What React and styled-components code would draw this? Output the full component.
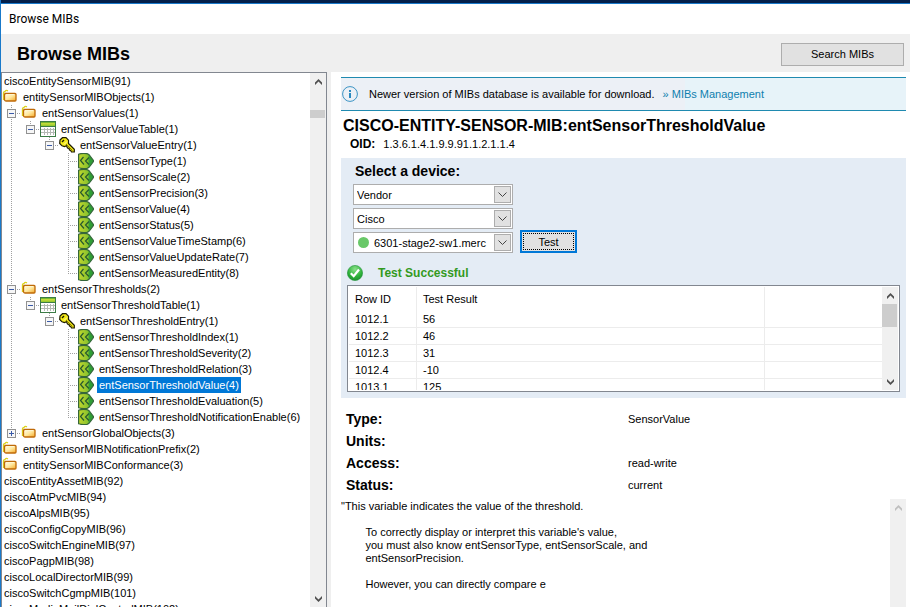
import React from "react";
import styled, { createGlobalStyle, css } from "styled-components";

const leaves = (names) =>
  names.map((name) => ({ name, icon: "leaf" }));

// The MIB tree, in display order
const tree = [
  {
    name: "ciscoEntitySensorMIB(91)",
    children: [
      {
        name: "entitySensorMIBObjects(1)",
        icon: "folder",
        children: [
          {
            name: "entSensorValues(1)",
            icon: "folder",
            toggle: "minus",
            children: [
              {
                name: "entSensorValueTable(1)",
                icon: "table",
                toggle: "minus",
                children: [
                  {
                    name: "entSensorValueEntry(1)",
                    icon: "key",
                    toggle: "minus",
                    children: leaves([
                      "entSensorType(1)",
                      "entSensorScale(2)",
                      "entSensorPrecision(3)",
                      "entSensorValue(4)",
                      "entSensorStatus(5)",
                      "entSensorValueTimeStamp(6)",
                      "entSensorValueUpdateRate(7)",
                      "entSensorMeasuredEntity(8)",
                    ]),
                  },
                ],
              },
            ],
          },
          {
            name: "entSensorThresholds(2)",
            icon: "folder",
            toggle: "minus",
            children: [
              {
                name: "entSensorThresholdTable(1)",
                icon: "table",
                toggle: "minus",
                children: [
                  {
                    name: "entSensorThresholdEntry(1)",
                    icon: "key",
                    toggle: "minus",
                    children: leaves([
                      "entSensorThresholdIndex(1)",
                      "entSensorThresholdSeverity(2)",
                      "entSensorThresholdRelation(3)",
                      "entSensorThresholdValue(4)",
                      "entSensorThresholdEvaluation(5)",
                      "entSensorThresholdNotificationEnable(6)",
                    ]),
                  },
                ],
              },
            ],
          },
          { name: "entSensorGlobalObjects(3)", icon: "folder", toggle: "plus" },
        ],
      },
      { name: "entitySensorMIBNotificationPrefix(2)", icon: "folder" },
      { name: "entitySensorMIBConformance(3)", icon: "folder" },
    ],
  },
  { name: "ciscoEntityAssetMIB(92)" },
  { name: "ciscoAtmPvcMIB(94)" },
  { name: "ciscoAlpsMIB(95)" },
  { name: "ciscoConfigCopyMIB(96)" },
  { name: "ciscoSwitchEngineMIB(97)" },
  { name: "ciscoPagpMIB(98)" },
  { name: "ciscoLocalDirectorMIB(99)" },
  { name: "ciscoSwitchCgmpMIB(101)" },
  { name: "ciscoMediaMailDialControlMIB(102)" },
];

const results = [
  ["1012.1", "56"],
  ["1012.2", "46"],
  ["1012.3", "31"],
  ["1012.4", "-10"],
  ["1013.1", "125"],
];

const details = [
  ["Type:", "SensorValue"],
  ["Units:", ""],
  ["Access:", "read-write"],
  ["Status:", "current"],
];

const description = `"This variable indicates the value of the threshold.

        To correctly display or interpret this variable's value,
        you must also know entSensorType, entSensorScale, and
        entSensorPrecision.

        However, you can directly compare e`;

const App = () => {
  const [selected, setSelected] = React.useState("entSensorThresholdValue(4)");
  return (
    <>
      <GlobalStyle />
      <IconDefs />
      <Window>
        <TitleBar>Browse MIBs</TitleBar>
        <Header>
          <h1>Browse MIBs</h1>
          <PushButton type="button" $wide>
            Search MIBs
          </PushButton>
        </Header>
        <Main>
          <TreePanel>
            <TreeList role="tree" aria-label="MIB tree">
              {tree.map((node) => (
                <TreeNode
                  key={node.name}
                  node={node}
                  depth={-1}
                  guides={[]}
                  selected={selected}
                  onSelect={setSelected}
                />
              ))}
            </TreeList>
            <ScrollBar offset={20} thumb={8} />
          </TreePanel>
          <Content>
            <Notice>
              <InfoIcon />
              <p>Newer version of MIBs database is available for download.</p>
              <a href="#mibs-management">» MIBs Management</a>
            </Notice>
            <Heading>CISCO-ENTITY-SENSOR-MIB:entSensorThresholdValue</Heading>
            <Oid>
              <strong>OID:</strong>
              <span>1.3.6.1.4.1.9.9.91.1.2.1.1.4</span>
            </Oid>
            <TestPanel />
            <Details>
              {details.map(([label, value]) => (
                <React.Fragment key={label}>
                  <dt>{label}</dt>
                  <dd>{value}</dd>
                </React.Fragment>
              ))}
            </Details>
            <Description>
              <textarea
                aria-label="Description"
                readOnly
                value={description}
              />
              <ScrollBar disabled />
            </Description>
          </Content>
        </Main>
      </Window>
    </>
  );
};

// One tree entry together with everything below it
const TreeNode = ({ node, depth, guides, last, selected, onSelect }) => {
  const { name, icon, toggle, children } = node;
  const NodeIcon = icons[icon];
  // Only entries below a top folder are joined by dotted lines
  const own = depth > 0 ? [last ? "last" : "tee"] : [];
  const below = depth > 0 ? [...guides, last ? "none" : "pass"] : [];
  return (
    <li role="treeitem" aria-selected={name === selected}>
      <Row>
        {[...guides, ...own].map((kind, index) => (
          <Guide key={index} $kind={kind}>
            {toggle && index === depth - 1 && (
              <Toggle type="button" aria-label={`Toggle ${name}`}>
                <svg viewBox="0 0 9 9" width="9" height="9">
                  <path
                    d={toggle === "plus" ? "M2 4.5h5M4.5 2v5" : "M2 4.5h5"}
                    stroke="#3a5aa8"
                  />
                </svg>
              </Toggle>
            )}
          </Guide>
        ))}
        {NodeIcon && (
          <IconCell>
            <NodeIcon />
          </IconCell>
        )}
        <Label
          type="button"
          $active={name === selected}
          onClick={() => onSelect(name)}
        >
          {name}
        </Label>
      </Row>
      {children && (
        <TreeList role="group">
          {children.map((child, index) => (
            <TreeNode
              key={child.name}
              node={child}
              depth={depth + 1}
              guides={below}
              last={index === children.length - 1}
              selected={selected}
              onSelect={onSelect}
            />
          ))}
        </TreeList>
      )}
    </li>
  );
};

// Device pickers, the test button and the result table
const TestPanel = () => {
  return (
    <Panel>
      <h2>Select a device:</h2>
      <Pickers>
        <Picker label="Vendor mode" value="Vendor" />
        <Picker label="Vendor name" value="Cisco" />
        <PickerLine>
          <Picker label="Device" value="6301-stage2-sw1.merc" status />
          <PushButton type="button" $focused>
            Test
          </PushButton>
        </PickerLine>
      </Pickers>
      <Status role="status">
        <CheckIcon />
        Test Successful
      </Status>
      <TableFrame>
        <TableClip>
          <ResultTable>
            <thead>
              <tr>
                <th>Row ID</th>
                <th>Test Result</th>
                <th aria-label="Empty" />
              </tr>
            </thead>
            <tbody>
              {results.map(([id, value]) => (
                <tr key={id}>
                  <td>{id}</td>
                  <td>{value}</td>
                  <td />
                </tr>
              ))}
            </tbody>
          </ResultTable>
        </TableClip>
        <ScrollBar offset={0} thumb={23} />
      </TableFrame>
    </Panel>
  );
};

const Picker = ({ label, value, status }) => {
  return (
    <PickerBox>
      {status && <Dot />}
      <select aria-label={label} defaultValue={value}>
        <option>{value}</option>
      </select>
      <span className="arrow">
        <svg width="9" height="5" viewBox="0 0 9 5" fill="none">
          <path d="M.5 .5l4 4 4-4" stroke="#444" />
        </svg>
      </span>
    </PickerBox>
  );
};

const ScrollBar = ({ offset, thumb, disabled }) => {
  return (
    <Bar $disabled={disabled} aria-hidden="true">
      <Arrow d="M0 3.500L3.500 0 7 3.500V6L3.500 2.500 0 6z" />
      <Track>
        {thumb && <Thumb style={{ marginTop: offset, height: thumb }} />}
      </Track>
      {!disabled && <Arrow d="M0 2.500L3.500 6 7 2.500V0L3.500 3.500 0 0z" />}
    </Bar>
  );
};

const Arrow = ({ d }) => (
  <span className="arrow">
    <svg width="7" height="6" viewBox="0 0 7 6">
      <path d={d} fill="currentColor" />
    </svg>
  </span>
);

const IconDefs = () => (
  <Defs aria-hidden="true">
    <defs>
      <linearGradient id="gold" x1="0" y1="0" x2="1" y2="1">
        <stop offset="0" stopColor="#fffdf0" />
        <stop offset=".5" stopColor="#ffe9a0" />
        <stop offset="1" stopColor="#f5a623" />
      </linearGradient>
      <linearGradient id="lime" x1="0" y1="0" x2="1" y2="0">
        <stop offset="0" stopColor="#c3d82c" />
        <stop offset=".6" stopColor="#8cc32e" />
        <stop offset=".75" stopColor="#2f9e35" />
        <stop offset="1" stopColor="#2f9e35" />
      </linearGradient>
      <linearGradient id="tableHead" x1="0" y1="0" x2="0" y2="1">
        <stop offset="0" stopColor="#4fa62c" />
        <stop offset=".4" stopColor="#c9de3c" />
        <stop offset="1" stopColor="#8cc62c" />
      </linearGradient>
      <radialGradient id="success" cx=".5" cy=".25" r=".8">
        <stop offset="0" stopColor="#8ae08a" />
        <stop offset=".6" stopColor="#2eb23a" />
        <stop offset="1" stopColor="#188a2a" />
      </radialGradient>
    </defs>
  </Defs>
);

const FolderIcon = () => (
  <svg width="16" height="16" viewBox="0 0 16 16">
    <path
      d="M1.500 11V4Q1.500 2.500 3 2.500Q4 .8 6 1.800"
      fill="none"
      stroke="#ddd21c"
      strokeWidth="1.300"
    />
    <path
      d="M3.500 4.500h9.500q1 0 1 1v5.500q0 1-1 1h-9q-1 0-1.500-1V5.500q.3-1 1-1z"
      fill="url(#gold)"
      stroke="#bf6a08"
      strokeWidth="1.300"
    />
    <path d="M4 5.500h8.500" stroke="#fff6cf" />
  </svg>
);

const TableIcon = () => (
  <svg width="16" height="16" viewBox="0 0 16 16" shapeRendering="crispEdges">
    <path d="M0 0h16v16H0z" fill="#3c7c46" />
    <path d="M1 1h14v4H1z" fill="url(#tableHead)" />
    <path d="M1 6h14v9H1z" fill="#fff" />
    <path
      d="M1 8.500h14M1 11.500h14M4.500 7v7M7.500 7v7M10.500 7v7M13.500 7v7"
      stroke="#b4b9b4"
    />
  </svg>
);

const KeyIcon = () => (
  <svg width="16" height="16" viewBox="0 0 16 16">
    <path
      d="M1 3L3.500 .700H7L9.500 3.200V6.500L15.300 12.300V15H12.500L11.700 13.500 10.500 13 10 11.500 8.500 11 7.500 8.800 5.500 9.500 3 8.800 .700 6.500z"
      fill="#f4ea16"
      stroke="#1c1a00"
      strokeWidth="1.200"
    />
    <path d="M3 5l2-2" stroke="#1c1a00" strokeWidth="1.400" />
    <path d="M7 7l6.500 6.500" stroke="#8b8200" />
    <path d="M5 7.500L8 4.500" stroke="#fffbb0" />
  </svg>
);

const LeafIcon = () => (
  <svg width="16" height="16" viewBox="0 0 16 16">
    <path
      d="M.6 1.200Q4 0 9 .6Q11 1 12.500 3.500L15.400 7.500v1L12.500 12.500Q11 15 9 15.400Q4 16 .6 14.800z"
      fill="url(#lime)"
      stroke="#35663a"
      strokeWidth="1.200"
    />
    <path
      d="M5.500 4L2.500 7.500 6 11.500M11 4.500L7.500 8 11 11.500"
      fill="none"
      stroke="#27592f"
      strokeWidth="1.200"
    />
  </svg>
);

const InfoIcon = () => (
  <svg width="16" height="16" viewBox="0 0 16 16" fill="none">
    <circle cx="8" cy="8" r="7.400" stroke="#3a93c4" />
    <path d="M7 4h2v2H7zM7 7h2v5H7z" fill="#2b8ac0" />
  </svg>
);

const CheckIcon = () => (
  <svg width="16" height="16" viewBox="0 0 16 16">
    <circle
      cx="8"
      cy="8"
      r="7.600"
      fill="url(#success)"
      stroke="#23923a"
      strokeWidth=".6"
    />
    <path
      d="M3.800 8.200l2.900 3 5.300-6.700"
      fill="none"
      stroke="#fff"
      strokeWidth="2.200"
    />
  </svg>
);

const icons = {
  folder: FolderIcon,
  table: TableIcon,
  key: KeyIcon,
  leaf: LeafIcon,
};

const GlobalStyle = createGlobalStyle`
  * {
    box-sizing: border-box;
  }
  body {
    margin: 0;
    overflow: hidden;
    background: #fff;
  }
  body, button, select, textarea {
    font-family: "Liberation Sans", Arial, sans-serif;
    font-size: 11px;
    line-height: 16px;
    color: #000;
  }
  h1, h2, p, ul, dl, dd {
    margin: 0;
    padding: 0;
  }
  svg {
    display: block;
    flex: none;
  }
`;

const Defs = styled.svg`
  position: absolute;
  width: 0;
  height: 0;
`;

const Window = styled.div`
  height: 100vh;
  display: flex;
  flex-direction: column;
  background: #efefef;
  border-left: 1px solid #1979ca;
`;

const TitleBar = styled.div`
  flex: none;
  height: 34px;
  padding: 8px 8px 0;
  background: #fff;
  border-top: 3px solid #04204a;
  box-shadow: inset 0 1px #1979ca;
  font-family: Roboto, sans-serif;
  font-size: 12px;
`;

const Header = styled.header`
  flex: none;
  height: 38px;
  padding: 2px 6px 0 16px;
  display: flex;
  align-items: center;
  justify-content: space-between;
  h1 {
    font-size: 18px;
    line-height: 20px;
  }
`;

const PushButton = styled.button`
  width: ${(props) => (props.$wide ? "123px" : "57px")};
  height: 23px;
  padding: 0;
  background: #e1e1e1;
  border: 1px solid #adadad;
  ${(props) =>
    props.$focused &&
    css`
      border: 2px solid #0078d7;
      outline: 1px dotted #000;
      outline-offset: -4px;
    `}
`;

const Main = styled.main`
  flex: 1;
  min-height: 0;
  display: flex;
  gap: 4px;
`;

const TreePanel = styled.nav`
  flex: 0 0 326px;
  min-width: 0;
  display: flex;
  background: #fff;
  border: 1px solid #828790;
  border-bottom: 0;
  > ul {
    flex: 1;
    min-width: 0;
    overflow: hidden;
  }
`;

const TreeList = styled.ul`
  list-style: none;
`;

const Row = styled.div`
  height: 16px;
  display: flex;
  white-space: nowrap;
`;

const dotsDown = "repeating-linear-gradient(#a0a0a0 0 1px, transparent 1px 2px)";
const dotsAcross =
  "repeating-linear-gradient(90deg, #a0a0a0 0 1px, transparent 1px 2px)";

const guideLines = {
  none: "none",
  pass: `${dotsDown} 9px 0 / 1px 16px no-repeat`,
  tee: `${dotsDown} 9px 0 / 1px 16px no-repeat, ${dotsAcross} 9px 8px / 10px 1px no-repeat`,
  last: `${dotsDown} 9px 0 / 1px 8px no-repeat, ${dotsAcross} 9px 8px / 10px 1px no-repeat`,
};

const Guide = styled.span`
  flex: none;
  width: 19px;
  height: 16px;
  padding: 4px 5px;
  background: ${(props) => guideLines[props.$kind]};
`;

const Toggle = styled.button`
  display: block;
  width: 9px;
  height: 9px;
  padding: 0;
  background: #f6f6f6;
  border: 0;
  outline: 1px solid #919191;
  outline-offset: -1px;
`;

const IconCell = styled.span`
  flex: none;
  width: 19px;
`;

const Label = styled.button`
  height: 16px;
  padding: 0 2px;
  border: 0;
  background: ${(props) => (props.$active ? "#0078d7" : "transparent")};
  color: ${(props) => (props.$active ? "#fff" : "#000")};
`;

const Bar = styled.div`
  flex: none;
  width: 16px;
  display: flex;
  flex-direction: column;
  background: #f0f0f0;
  color: ${(props) => (props.$disabled ? "#bfbfbf" : "#505050")};
  .arrow {
    height: 17px;
    display: grid;
    place-items: center;
  }
`;

const Track = styled.div`
  flex: 1;
`;

const Thumb = styled.div`
  width: 15px;
  background: #cdcdcd;
`;

const Content = styled.section`
  flex: 1;
  min-width: 0;
  display: flex;
  flex-direction: column;
  padding: 5px 4px 0 10px;
  background: #fff;
`;

const Notice = styled.div`
  flex: none;
  height: 34px;
  padding: 0 1px;
  display: flex;
  align-items: center;
  background: linear-gradient(90deg, #ecf0f6 344px, #e7f3f9 344px);
  border-top: 1px solid #1f8ab0;
  border-bottom: 1px solid #1f8ab0;
  p {
    margin: 0 8px 0 11px;
  }
  a {
    color: #0f7fae;
    text-decoration: none;
  }
`;

const Heading = styled.h2`
  margin-top: 5px;
  padding-left: 2px;
  font-size: 16px;
  line-height: 20px;
  white-space: nowrap;
`;

const Oid = styled.p`
  padding-left: 9px;
  display: flex;
  gap: 8px;
  margin-bottom: 6px;
  strong {
    font-size: 12px;
  }
`;

const Panel = styled.section`
  flex: none;
  padding: 4px 6px 6px;
  background: #e4ecf5;
  h2 {
    padding-left: 8px;
    font-size: 14px;
    line-height: 18px;
  }
`;

const Pickers = styled.div`
  padding: 4px 6px 0;
  display: flex;
  flex-direction: column;
  gap: 3px;
`;

const PickerLine = styled.div`
  height: 21px;
  display: flex;
  align-items: flex-end;
  gap: 7px;
`;

const PickerBox = styled.div`
  width: 160px;
  height: 21px;
  padding: 1px 1px 1px 3px;
  display: flex;
  align-items: center;
  background: #fff;
  border: 1px solid #adadad;
  select {
    flex: 1;
    min-width: 0;
    height: 17px;
    padding: 0;
    border: 0;
    background: transparent;
    appearance: none;
  }
  .arrow {
    width: 17px;
    height: 17px;
    display: grid;
    place-items: center;
    background: #e1e1e1;
    border: 1px solid #adadad;
    pointer-events: none;
  }
`;

const Dot = styled.span`
  flex: none;
  width: 11px;
  height: 11px;
  margin: 0 5px 0 1px;
  border-radius: 50%;
  background: #68c868;
`;

const Status = styled.p`
  height: 32px;
  padding-top: 8px;
  display: flex;
  align-items: center;
  gap: 15px;
  color: #339a1e;
  font-size: 12px;
  font-weight: 700;
`;

const TableFrame = styled.div`
  height: 107px;
  padding: 1px;
  display: flex;
  background: #fff;
  border: 1px solid #828790;
`;

const TableClip = styled.div`
  flex: 1;
  overflow: hidden;
`;

const ResultTable = styled.table`
  width: 100%;
  table-layout: fixed;
  border-collapse: separate;
  border-spacing: 0;
  th,
  td {
    padding: 0 6px;
    text-align: left;
    border-right: 1px solid #ececec;
  }
  th {
    height: 24px;
    font-weight: 400;
  }
  td {
    height: 17px;
    border-bottom: 1px solid #ececec;
  }
  th:first-child {
    width: 68px;
  }
  th:last-child {
    width: 22%;
  }
  th:last-child,
  td:last-child {
    border-right: 0;
  }
`;

const Details = styled.dl`
  flex: none;
  padding: 10px 0 0 5px;
  margin-right: -4px;
  display: grid;
  grid-template-columns: 1fr 1fr;
  grid-auto-rows: 22px;
  align-items: center;
  dt {
    font-size: 14px;
    font-weight: 700;
  }
`;

const Description = styled.div`
  flex: 1;
  min-height: 0;
  display: flex;
  margin-top: 3px;
  textarea {
    flex: 1;
    padding: 1px 0 0;
    line-height: 13px;
    border: 0;
    outline: 0;
    resize: none;
    overflow: hidden;
  }
`;

export default App;
